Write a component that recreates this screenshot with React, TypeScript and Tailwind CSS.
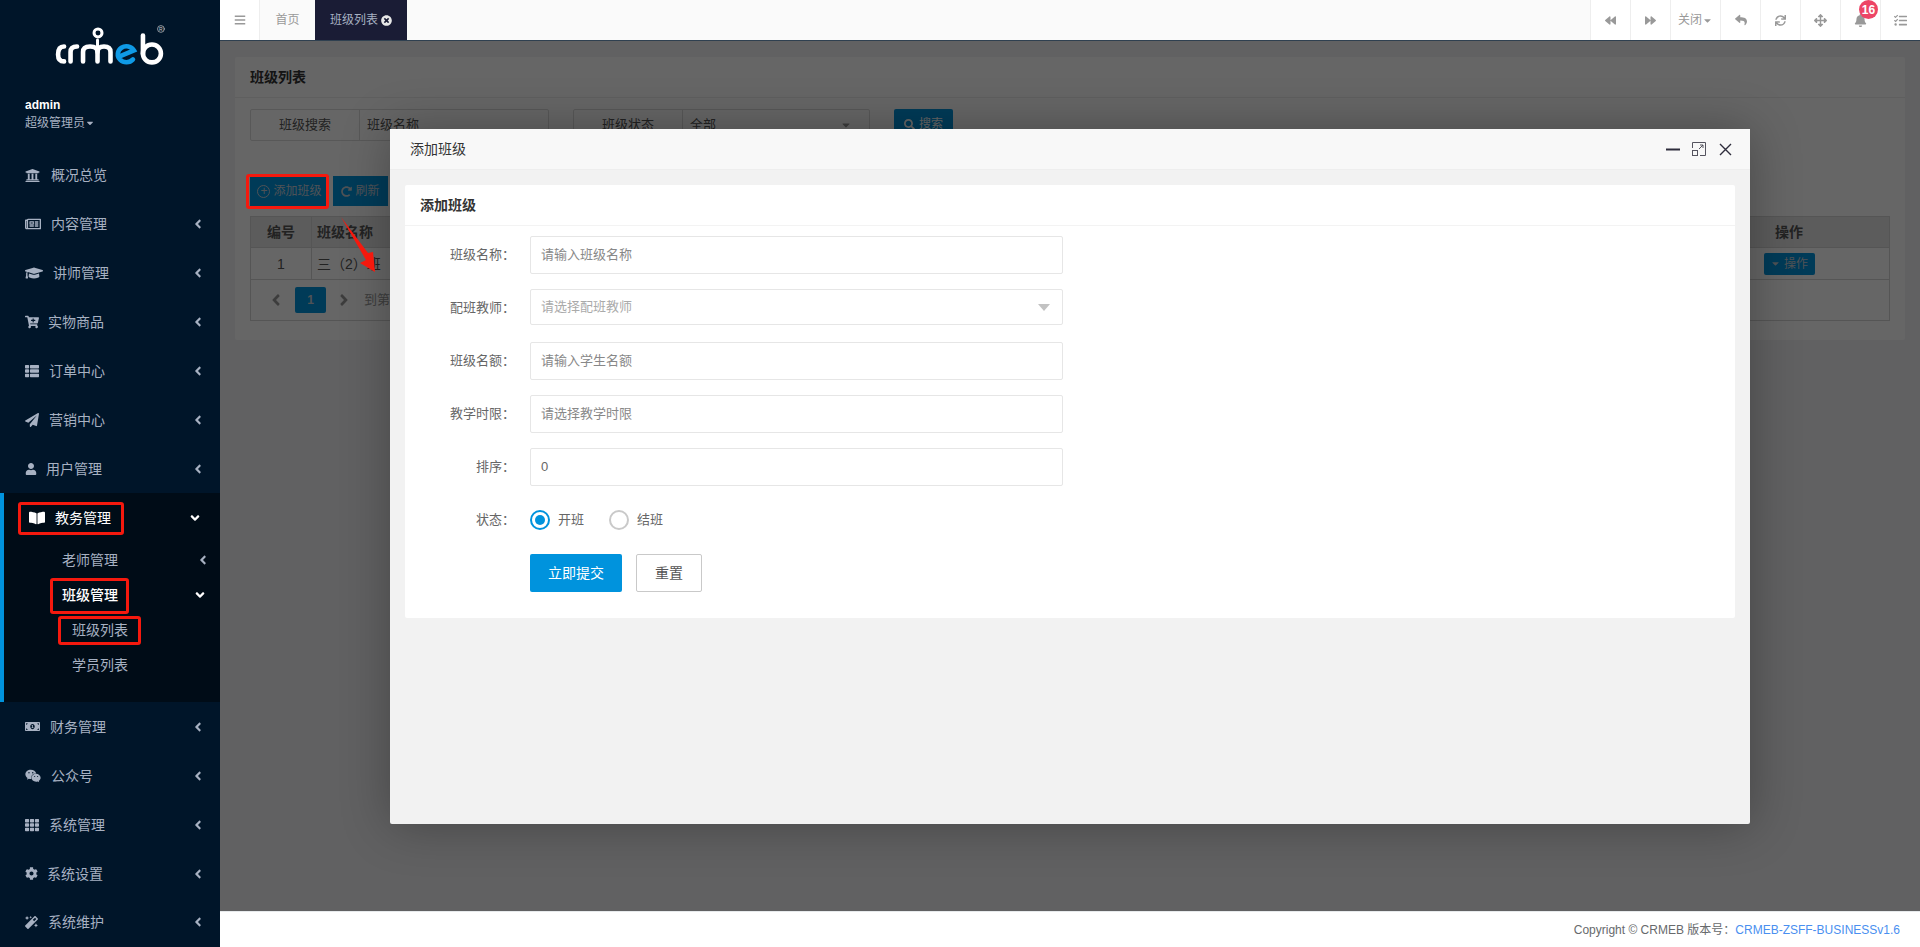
import type { ReactNode } from "react";
import {
  FaAngleDown,
  FaAngleLeft,
  FaArrowsAlt,
  FaBackward,
  FaBars,
  FaBell,
  FaBookOpen,
  FaCaretDown,
  FaCartPlus,
  FaCog,
  FaForward,
  FaGraduationCap,
  FaMagic,
  FaMoneyBillAlt,
  FaPaperPlane,
  FaRedoAlt,
  FaRegNewspaper,
  FaReply,
  FaSearch,
  FaSync,
  FaTasks,
  FaTh,
  FaThList,
  FaTimesCircle,
  FaUniversity,
  FaUser,
  FaWeixin,
} from "react-icons/fa";

function Logo() {
  return (
    <svg width="220" height="76" viewBox="0 0 220 76" fill="none" strokeLinecap="round">
      <g stroke="#fff" strokeWidth="4.6">
        <path d="M64 46.5 Q58 46.5 58 54.5 Q58 61.5 64 61.5" />
        <path d="M70.5 61.5 V52 Q70.5 46.5 77 46.5" />
        <path d="M83 61.5 V52 Q83 46.5 90 46.5 Q97.5 46.5 97.5 52 V61.5" />
        <path d="M97.5 52 Q97.5 46.5 104 46.5 Q110.5 46.5 110.5 52 V61.5" />
        <path d="M97.5 40 V47" strokeWidth="3" />
        <path d="M143 35.5 V54" />
        <circle cx="152" cy="53.5" r="9" />
      </g>
      <circle cx="98" cy="33" r="4" stroke="#fff" strokeWidth="3" />
      <path d="M118.5 57 L134 50.5 A8.6 8 0 1 0 133 59.5" stroke="#0f9ae6" strokeWidth="4.6" />
      <circle cx="161" cy="29" r="3.4" stroke="#ccc" strokeWidth="0.7" />
      <text x="161" y="31" textAnchor="middle" fontSize="5" fill="#ccc">R</text>
    </svg>
  );
}

const topMenus = [
  { label: "概况总览", icon: <FaUniversity size={15} />, w: "w-[26px]", arrow: false },
  { label: "内容管理", icon: <FaRegNewspaper size={16} />, w: "w-[26px]", arrow: true },
  { label: "讲师管理", icon: <FaGraduationCap size={18} />, w: "w-[28px]", arrow: true },
  { label: "实物商品", icon: <FaCartPlus size={14} />, w: "w-[23px]", arrow: true },
  { label: "订单中心", icon: <FaThList size={14} />, w: "w-[24px]", arrow: true },
  { label: "营销中心", icon: <FaPaperPlane size={14} />, w: "w-[24px]", arrow: true },
  { label: "用户管理", icon: <FaUser size={12} />, w: "w-[21px]", arrow: true },
];

const bottomMenus = [
  { label: "财务管理", icon: <FaMoneyBillAlt size={15} />, w: "w-[25px]" },
  { label: "公众号", icon: <FaWeixin size={16} />, w: "w-[26px]" },
  { label: "系统管理", icon: <FaTh size={14} />, w: "w-[24px]" },
  { label: "系统设置", icon: <FaCog size={13} />, w: "w-[22px]" },
  { label: "系统维护", icon: <FaMagic size={13} />, w: "w-[23px]" },
];

function MenuItem({ label, icon, w, arrow = true }: { label: string; icon: ReactNode; w: string; arrow?: boolean }) {
  return (
    <div className="flex h-[49px] items-center pl-[25px] pr-[15px] text-sm text-[#a7b1c2]">
      <span className={`${w} flex shrink-0 items-center`}>{icon}</span>
      <span>{label}</span>
      {arrow && <FaAngleLeft size={14} className="ml-auto" />}
    </div>
  );
}

function Sidebar() {
  return (
    <aside className="flex w-[220px] shrink-0 flex-col bg-[#001529]">
      <Logo />
      <div className="pb-[19px] pl-[25px] pt-[20px] text-xs leading-[18px]">
        <div className="font-bold text-white">admin</div>
        <div className="flex items-center text-[#a7b1c2]">
          超级管理员
          <FaCaretDown size={10} />
        </div>
      </div>
      {topMenus.map((m) => (
        <MenuItem key={m.label} {...m} />
      ))}
      <div className="h-[209px] border-l-4 border-[#0093dd] bg-[#000c17] pb-[20px] text-sm">
        <div className="flex h-[49px] items-center pl-[25px] pr-[18px] text-white">
          <span className="flex w-[26px] shrink-0 items-center">
            <FaBookOpen size={16} />
          </span>
          <span>教务管理</span>
          <FaAngleDown size={14} className="ml-auto" />
        </div>
        <div className="flex h-[35px] items-center pl-[58px] pr-[10px] text-[#a7b1c2]">
          老师管理
          <FaAngleLeft size={14} className="ml-auto" />
        </div>
        <div className="flex h-[35px] items-center pl-[58px] pr-[13px] font-medium text-white">
          班级管理
          <FaAngleDown size={14} className="ml-auto" />
        </div>
        <div className="flex h-[35px] items-center pl-[68px] text-[#a7b1c2]">班级列表</div>
        <div className="flex h-[35px] items-center pl-[68px] text-[#a7b1c2]">学员列表</div>
      </div>
      {bottomMenus.map((m) => (
        <MenuItem key={m.label} {...m} />
      ))}
    </aside>
  );
}

function ToolButton({ children, wide = false }: { children: ReactNode; wide?: boolean }) {
  return (
    <div
      className={`relative flex h-full items-center justify-center border-l border-[#eee] bg-white text-xs text-[#999] ${
        wide ? "w-[50px]" : "w-[40px]"
      }`}
    >
      {children}
    </div>
  );
}

function TopBar() {
  return (
    <header className="flex h-[41px] shrink-0 border-b border-[#2f4050] bg-[#fafafa]">
      <div className="flex w-[40px] items-center justify-center border-r border-[#eee] bg-white text-[#999]">
        <FaBars size={12} />
      </div>
      <div className="flex w-[55px] items-center justify-center text-xs text-[#999]">首页</div>
      <div className="flex w-[92px] items-center justify-center gap-[3px] bg-[#1a1c35] text-xs text-[#a7b1c2]">
        班级列表
        <FaTimesCircle size={11} className="text-[#e8e8e8]" />
      </div>
      <div className="ml-auto flex h-full">
        <ToolButton><FaBackward size={11} /></ToolButton>
        <ToolButton><FaForward size={11} /></ToolButton>
        <ToolButton wide>
          关闭
          <FaCaretDown size={11} />
        </ToolButton>
        <ToolButton><FaReply size={12} /></ToolButton>
        <ToolButton><FaSync size={11} /></ToolButton>
        <ToolButton><FaArrowsAlt size={13} /></ToolButton>
        <ToolButton>
          <FaBell size={13} />
          <span className="absolute left-[18px] top-0 flex h-[19px] w-[19px] items-center justify-center rounded-full bg-[#ed4566] text-xs font-bold text-white">
            16
          </span>
        </ToolButton>
        <ToolButton><FaTasks size={13} /></ToolButton>
      </div>
    </header>
  );
}

function SearchGroup({ label, value, select = false, width }: { label: string; value: string; select?: boolean; width: string }) {
  return (
    <div className={`flex h-[32px] rounded-[2px] border border-[#dcdcdc] text-[13px] text-[#555] ${width}`}>
      <div className="flex w-[109px] items-center justify-center border-r border-[#dcdcdc]">{label}</div>
      <div className="flex flex-1 items-center px-[7px]">
        {value}
        {select && <FaCaretDown size={12} className="ml-auto mr-[10px] text-[#999]" />}
      </div>
    </div>
  );
}

function ListPage() {
  return (
    <div className="mx-[15px] mt-[16px] h-[283px] rounded-[2px] bg-white">
      <div className="flex h-[41px] items-center border-b border-[#eee] pl-[15px] text-sm font-bold text-[#333]">班级列表</div>
      <div className="px-[15px] pt-[11px]">
        <div className="flex gap-[24px]">
          <SearchGroup label="班级搜索" value="班级名称" width="w-[299px]" />
          <SearchGroup label="班级状态" value="全部" select width="w-[297px]" />
          <button className="flex h-[30px] w-[59px] items-center justify-center gap-1 rounded-[2px] bg-[#0093dd] text-xs text-white">
            <FaSearch size={11} />
            搜索
          </button>
        </div>
        <div className="mt-[35px] flex gap-[4px] text-xs text-[#c6cdd5]">
          <button className="flex h-[30px] w-[79px] items-center justify-center gap-[3px] bg-[#0093dd]">
            <span className="flex h-[13px] w-[13px] items-center justify-center rounded-full border border-current leading-none">+</span>
            添加班级
          </button>
          <button className="flex h-[30px] w-[55px] items-center justify-center gap-[3px] bg-[#0093dd]">
            <FaRedoAlt size={11} />
            刷新
          </button>
        </div>
        <div className="mt-[10px] border border-[#d4d4d4] text-sm text-[#555]">
          <div className="flex h-[31px] items-center border-b border-[#d4d4d4] bg-[#e6e6e6] font-bold">
            <div className="flex h-full w-[61px] items-center justify-center border-r border-[#d4d4d4]">编号</div>
            <div className="pl-[5px]">班级名称</div>
            <div className="ml-auto w-[200px] text-center">操作</div>
          </div>
          <div className="flex h-[32px] items-center border-b border-[#d4d4d4]">
            <div className="flex h-full w-[61px] items-center justify-center border-r border-[#d4d4d4]">1</div>
            <div className="pl-[5px]">三（2）班</div>
            <div className="ml-auto flex w-[200px] justify-center">
              <button className="flex h-[22px] w-[51px] items-center justify-center gap-[3px] rounded-[2px] bg-[#0093dd] text-xs text-[#c6cdd5]">
                <FaCaretDown size={11} />
                操作
              </button>
            </div>
          </div>
          <div className="flex h-[40px] items-center pl-[16px] text-[#999]">
            <FaAngleLeft size={18} />
            <div className="ml-[10px] flex h-[26px] w-[31px] items-center justify-center rounded-[2px] bg-[#0093dd] text-xs font-bold text-[#c6cdd5]">1</div>
            <FaAngleLeft size={18} className="ml-[9px] rotate-180" />
            <span className="ml-[11px] text-[13px]">到第</span>
          </div>
        </div>
      </div>
    </div>
  );
}

function Field({ label, placeholder, value, select = false, short = false }: { label: string; placeholder?: string; value?: string; select?: boolean; short?: boolean }) {
  return (
    <div className="flex h-[38px] items-start text-[13px]">
      <div className="flex h-[38px] w-[125px] shrink-0 items-center justify-end pr-[15px] text-[#666]">{label}：</div>
      <div
        className={`flex w-[533px] items-center rounded-[2px] border border-[#e6e6e6] bg-white px-[10px] ${
          short ? "h-[36px]" : "h-[38px]"
        } ${value ? "text-[#666]" : select ? "text-[#aaa]" : "text-[#888]"}`}
      >
        {value ?? placeholder}
        {select && (
          <svg width="12" height="7" viewBox="0 0 12 7" className="ml-auto mr-[2px]">
            <path d="M0 0h12L6 7z" fill="#c2c2c2" />
          </svg>
        )}
      </div>
    </div>
  );
}

function Radio({ label, checked = false }: { label: string; checked?: boolean }) {
  return (
    <div className="flex items-center gap-[8px] text-[13px] text-[#666]">
      <span className={`flex h-[20px] w-[20px] items-center justify-center rounded-full border-2 ${checked ? "border-[#0093dd]" : "border-[#c9c9c9]"}`}>
        {checked && <span className="h-[10px] w-[10px] rounded-full bg-[#0093dd]" />}
      </span>
      {label}
    </div>
  );
}

function Modal() {
  return (
    <div className="absolute left-[170px] top-[88px] flex h-[695px] w-[1360px] flex-col rounded-[2px] bg-[#f2f2f2] shadow-[1px_1px_50px_rgba(0,0,0,0.3)]">
      <div className="flex h-[41px] shrink-0 items-center border-b border-[#eee] bg-[#f8f8f8] pl-[20px] text-sm text-[#333]">
        添加班级
        <div className="ml-auto mr-[18px] flex items-center gap-[12px]">
          <svg width="14" height="14" viewBox="0 0 14 14">
            <path d="M0 7.5h14" stroke="#2e2d3c" strokeWidth="2" />
          </svg>
          <svg width="14" height="14" viewBox="0 0 14 14" fill="none" stroke="#55545f" strokeWidth="1">
            <path d="M.5 6V.5h13v13H8" />
            <rect x=".5" y="8.5" width="5" height="5" />
            <path d="M7 7l4-4M8 3h3v3" />
          </svg>
          <svg width="13" height="13" viewBox="0 0 13 13" className="ml-[1px]">
            <path d="M1 1l11 11M12 1L1 12" stroke="#2e2d3c" strokeWidth="1.4" />
          </svg>
        </div>
      </div>
      <div className="mx-[15px] mt-[15px] h-[433px] rounded-[2px] bg-white">
        <div className="flex h-[41px] items-center border-b border-[#f3f3f3] pl-[15px] text-sm font-bold text-[#333]">添加班级</div>
        <div className="flex flex-col gap-[15px] pt-[10px]">
          <Field label="班级名称" placeholder="请输入班级名称" />
          <Field label="配班教师" placeholder="请选择配班教师" select short />
          <Field label="班级名额" placeholder="请输入学生名额" />
          <Field label="教学时限" placeholder="请选择教学时限" />
          <Field label="排序" value="0" />
          <div className="flex h-[38px] items-center text-[13px]">
            <div className="w-[125px] shrink-0 pr-[15px] text-right text-[#666]">状态：</div>
            <div className="flex gap-[25px]">
              <Radio label="开班" checked />
              <Radio label="结班" />
            </div>
          </div>
          <div className="flex gap-[14px] pl-[125px] text-sm">
            <button className="h-[38px] w-[92px] rounded-[2px] bg-[#0093dd] text-white">立即提交</button>
            <button className="h-[38px] w-[66px] rounded-[2px] border border-[#c9c9c9] bg-white text-[#555]">重置</button>
          </div>
        </div>
      </div>
    </div>
  );
}

// red marks drawn over the screenshot
function Mark({ className }: { className: string }) {
  return <div className={`absolute rounded-[3px] border-[3px] border-[#f5190e] ${className}`} />;
}

export default function App() {
  return (
    <div className="relative flex h-screen w-full overflow-hidden font-['Liberation_Sans','Noto_Sans_CJK_SC',sans-serif]">
      <Sidebar />
      <main className="flex min-w-0 flex-1 flex-col">
        <TopBar />
        <div className="relative flex-1 bg-[#f3f3f4]">
          <ListPage />
          <div className="absolute inset-0 bg-black/60" />
          <Modal />
        </div>
        <footer className="flex h-[36px] shrink-0 items-center justify-end border-t border-[#e7eaec] bg-white pr-[20px] text-xs text-[#676a6c]">
          Copyright © CRMEB 版本号：<span className="text-[#4a8ff0]">CRMEB-ZSFF-BUSINESSv1.6</span>
        </footer>
      </main>
      <Mark className="left-[18px] top-[502px] h-[33px] w-[106px]" />
      <Mark className="left-[50px] top-[578px] h-[36px] w-[79px]" />
      <Mark className="left-[58px] top-[616px] h-[29px] w-[83px]" />
      <Mark className="left-[246px] top-[174px] h-[35px] w-[83px]" />
      <svg className="absolute left-[330px] top-[210px]" width="60" height="70" viewBox="0 0 60 70">
        <path d="M11 7 L38 43 L43 42 L45 62 L30 53 L36 50 Z" fill="#f5190e" />
      </svg>
    </div>
  );
}
